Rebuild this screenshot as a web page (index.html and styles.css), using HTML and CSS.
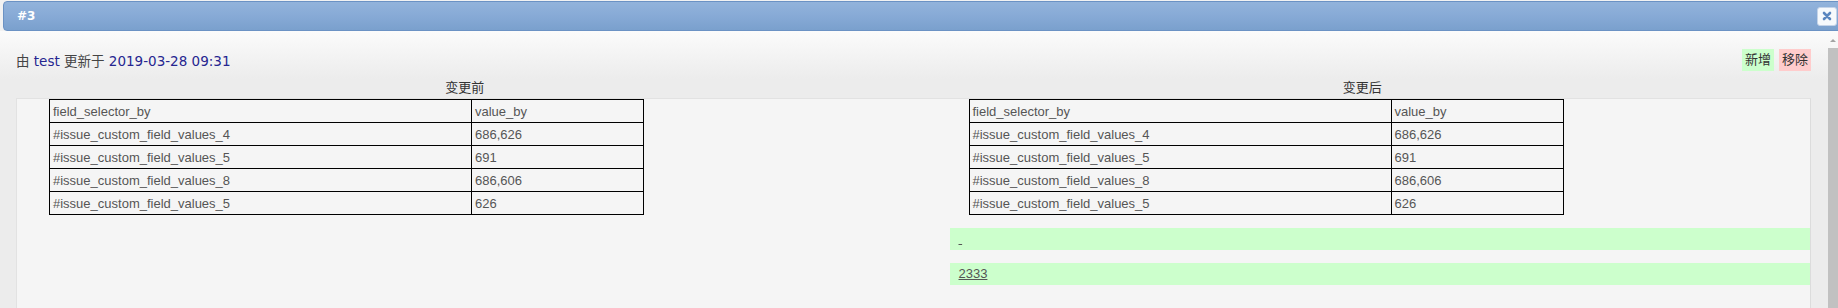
FILE: index.html
```html
<!DOCTYPE html>
<html>

<head>
    <title>#3</title>
    <link rel="stylesheet" href="styles.css">
</head>

<body>
    <div class="dialog">
        <div class="titlebar">
            <span class="title">#3</span>
            <button class="close-btn" title="close">
                <svg width="10" height="10" viewBox="0 0 10 10">
                    <path d="M2 2 L8 8 M8 2 L2 8" stroke="#5a86bf" stroke-width="2.6" stroke-linecap="round" />
                </svg>
            </button>
        </div>

        <div class="dialog-body">
            <div class="content">
                <div class="meta-row">
                    <p class="meta">由 <a href="#">test</a> 更新于 <a href="#">2019-03-28 09:31</a></p>
                    <div class="legend">
                        <span class="added">新增</span>
                        <span class="removed">移除</span>
                    </div>
                </div>

                <div class="diff-head">
                    <div>变更前</div>
                    <div>变更后</div>
                </div>

                <div class="diff-panel">
                    <div class="side before">
                        <table class="field-table">
                            <tr><td>field_selector_by</td><td>value_by</td></tr>
                            <tr><td>#issue_custom_field_values_4</td><td>686,626</td></tr>
                            <tr><td>#issue_custom_field_values_5</td><td>691</td></tr>
                            <tr><td>#issue_custom_field_values_8</td><td>686,606</td></tr>
                            <tr><td>#issue_custom_field_values_5</td><td>626</td></tr>
                        </table>
                    </div>
                    <div class="side after">
                        <table class="field-table">
                            <tr><td>field_selector_by</td><td>value_by</td></tr>
                            <tr><td>#issue_custom_field_values_4</td><td>686,626</td></tr>
                            <tr><td>#issue_custom_field_values_5</td><td>691</td></tr>
                            <tr><td>#issue_custom_field_values_8</td><td>686,606</td></tr>
                            <tr><td>#issue_custom_field_values_5</td><td>626</td></tr>
                        </table>
                        <div class="ins-line"><ins>&nbsp;</ins></div>
                        <div class="ins-line"><ins>2333</ins></div>
                    </div>
                </div>
            </div>

            <div class="scrollbar">
                <span class="scroll-arrow"></span>
                <span class="scroll-thumb"></span>
            </div>
        </div>
    </div>
</body>

</html>
```

FILE: styles.css
```css
body {
    margin: 0;
    height: 308px;
    overflow: hidden;
    background-color: #f2f2f2;
    font-family: "Liberation Sans", "Noto Sans CJK SC", sans-serif;
    font-size: 13px;
    color: #444;
}

.dialog {
    display: flex;
    flex-direction: column;
    height: 308px;
}

.titlebar {
    display: flex;
    flex-shrink: 0;
    align-items: center;
    justify-content: space-between;
    height: 28px;
    margin: 1px -4px 0 3px;
    padding: 0 4px 0 13px;
    border: 1px solid #6b92c4;
    border-radius: 4px;
    background: linear-gradient(to bottom, #92b3db 0%, #87aad6 50%, #7aa0cd 100%);
}

.title {
    font-family: "DejaVu Sans", sans-serif;
    font-weight: bold;
    font-size: 12px;
    color: #fff;
}

.close-btn {
    display: flex;
    align-items: center;
    justify-content: center;
    width: 20px;
    height: 19px;
    padding: 0;
    border: 1px solid #c4d3e8;
    border-radius: 3px;
    background-color: #f6f9fc;
}

.dialog-body {
    display: flex;
    flex-grow: 1;
    min-height: 0;
    overflow: hidden;
    background: linear-gradient(to bottom, #fbfbfb 0, #ececec 48px, #ececec 100%);
}

.content {
    flex-grow: 1;
    padding: 18px 17px 0 16px;
}

.meta-row {
    display: flex;
    align-items: center;
    justify-content: space-between;
    height: 22px;
}

.meta {
    margin: 0;
    font-family: "DejaVu Sans", "Noto Sans CJK SC", sans-serif;
    font-size: 13.5px;
    color: #444;
}

.meta a {
    color: #262690;
    text-decoration: none;
}

.legend {
    display: flex;
    gap: 5px;
}

.legend span {
    padding: 0 3px;
    line-height: 22px;
    color: #333;
}

.added {
    background-color: #ccffcc;
}

.removed {
    background-color: #ffcccc;
}

.diff-head {
    display: grid;
    grid-template-columns: 1fr 1fr;
    margin-top: 7px;
    line-height: 20px;
    text-align: center;
    color: #333;
}

.diff-panel {
    display: grid;
    grid-template-columns: 1fr 1fr;
    min-height: 220px;
    border: 1px solid #e2e2e2;
    border-right-color: #dcdcdc;
    background-color: #f5f5f5;
}

.side.before {
    padding-left: 32px;
}

.side.after {
    padding-left: 36px;
}

.side.after .field-table {
    margin-left: 19px;
}

.field-table {
    width: 595px;
    border-collapse: collapse;
    border: 1px solid #000;
}

.field-table td {
    height: 22px;
    padding: 0 0 0 3px;
    border: 1px solid #000;
    color: #555;
    white-space: nowrap;
}

.field-table td:first-child {
    width: 418px;
}

.ins-line {
    height: 22px;
    line-height: 22px;
    margin-top: 13px;
    padding-left: 9px;
    background-color: #ccffcc;
}

.ins-line ins {
    color: #555;
    text-decoration: underline;
}

.scrollbar {
    display: flex;
    flex-direction: column;
    width: 10px;
    padding-top: 3px;
}

.scroll-arrow {
    height: 14px;
    position: relative;
}

.scroll-arrow::after {
    content: "";
    position: absolute;
    left: 2px;
    top: 5px;
    border-left: 3px solid transparent;
    border-right: 3px solid transparent;
    border-bottom: 3px solid #a3a3a3;
}

.scroll-thumb {
    flex-grow: 1;
    background-color: #c1c1c1;
}
```
